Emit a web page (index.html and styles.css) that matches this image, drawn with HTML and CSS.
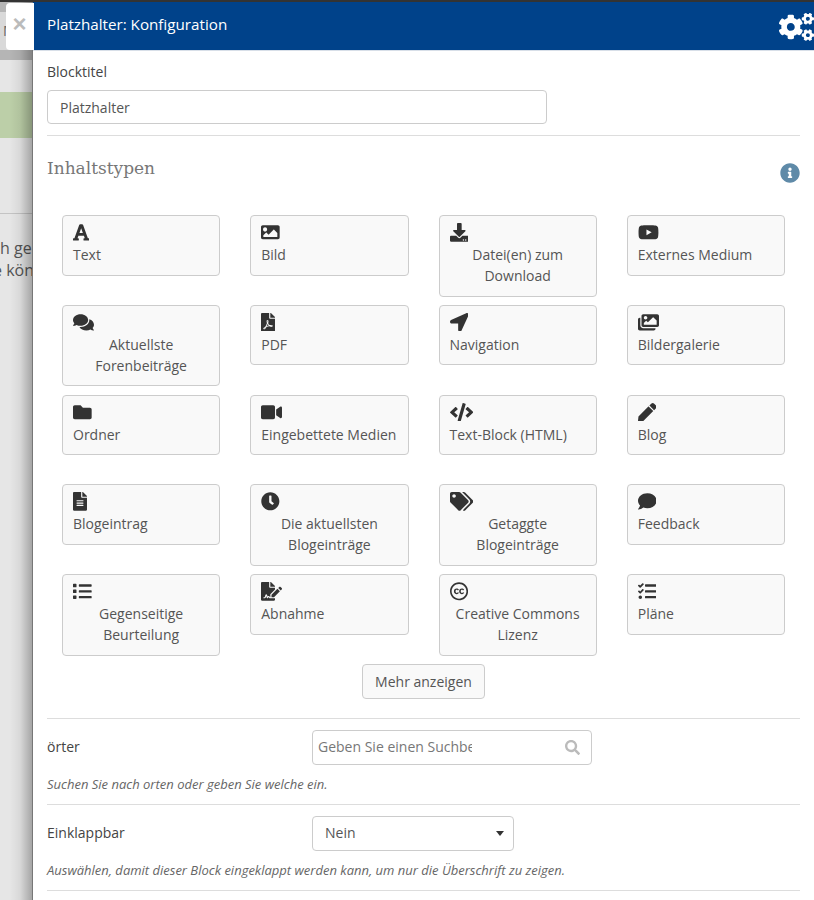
FILE: index.html
```html
<!DOCTYPE html>
<html lang="de">
<head>
<meta charset="utf-8">
<title>Platzhalter: Konfiguration</title>
<link rel="stylesheet" href="styles.css">
</head>
<body>
<div class="page">
  <div class="backdrop">
    <div class="bd-top"><span class="bd-top-letter">M</span></div>
    <div class="bd-nav"></div>
    <div class="bd-gap-a"></div>
    <div class="bd-alert"></div>
    <div class="bd-gap-b"></div>
    <div class="bd-text">
      <div class="bd-line">h gelöscht</div>
      <div class="bd-line bd-line-shift">e können</div>
    </div>
  </div>
  <button class="close" type="button" aria-label="Schließen">×</button>
  <main class="panel">
    <header class="panel-head">
      <h1 class="panel-title">Platzhalter: Konfiguration</h1>
      <svg class="cogs" viewBox="0 0 640 512"><path d="M512.1 191l-8.2 14.3c-3 5.3-9.4 7.5-15.1 5.4-11.8-4.4-22.6-10.7-32.1-18.6-4.6-3.8-5.8-10.5-2.8-15.7l8.2-14.3c-6.9-8-12.3-17.3-15.9-27.4h-16.5c-6 0-11.2-4.3-12.2-10.3-2-12-2.1-24.6 0-37.1 1-6 6.2-10.4 12.2-10.4h16.5c3.6-10.1 9-19.4 15.9-27.4l-8.2-14.3c-3-5.2-1.9-11.9 2.8-15.7 9.5-7.9 20.4-14.2 32.1-18.6 5.7-2.1 12.1.1 15.1 5.4l8.2 14.3c10.5-1.9 21.2-1.9 31.7 0L552 6.3c3-5.3 9.4-7.5 15.1-5.4 11.8 4.4 22.6 10.7 32.1 18.6 4.6 3.8 5.8 10.5 2.8 15.7l-8.2 14.3c6.9 8 12.3 17.3 15.9 27.4h16.5c6 0 11.2 4.3 12.2 10.3 2 12 2.1 24.6 0 37.1-1 6-6.2 10.4-12.2 10.4h-16.5c-3.6 10.1-9 19.4-15.9 27.4l8.2 14.3c3 5.2 1.9 11.9-2.8 15.7-9.5 7.9-20.4 14.2-32.1 18.6-5.7 2.1-12.1-.1-15.1-5.4l-8.2-14.3c-10.4 1.9-21.2 1.9-31.7 0zm-10.5-58.8c38.5 29.6 82.4-14.3 52.8-52.8-38.5-29.7-82.4 14.3-52.8 52.8zM386.3 286.1l33.7 16.8c10.1 5.8 14.5 18.1 10.5 29.1-8.9 24.2-26.4 46.4-42.6 65.8-7.4 8.9-20.2 11.1-30.3 5.3l-29.1-16.8c-16 13.7-34.6 24.6-54.9 31.7v33.6c0 11.6-8.3 21.6-19.7 23.6-24.6 4.2-50.4 4.4-75.9 0-11.5-2-20-11.9-20-23.6V418c-20.3-7.2-38.9-18-54.9-31.7L74 403c-10 5.8-22.9 3.6-30.3-5.3-16.2-19.4-33.3-41.6-42.2-65.7-4-10.9.4-23.2 10.5-29.1l33.3-16.8c-3.9-20.9-3.9-42.4 0-63.4L12 205.8c-10.1-5.8-14.6-18.1-10.5-29 8.9-24.2 26-46.4 42.2-65.8 7.4-8.9 20.2-11.1 30.3-5.3l29.1 16.8c16-13.7 34.6-24.6 54.9-31.7V57.1c0-11.5 8.2-21.5 19.6-23.5 24.6-4.2 50.5-4.4 76-.1 11.5 2 20 11.9 20 23.6v33.6c20.3 7.2 38.9 18 54.9 31.7l29.1-16.8c10-5.8 22.9-3.6 30.3 5.3 16.2 19.4 33.2 41.6 42.1 65.8 4 10.9.1 23.2-10 29.1l-33.7 16.8c3.9 21 3.9 42.5 0 63.5zm-117.6 21.1c59.2-77-28.7-164.9-105.7-105.7-59.2 77 28.7 164.9 105.7 105.7zm243.4 182.7l-8.2 14.3c-3 5.3-9.4 7.5-15.1 5.4-11.8-4.4-22.6-10.7-32.1-18.6-4.6-3.8-5.8-10.5-2.8-15.7l8.2-14.3c-6.9-8-12.3-17.3-15.9-27.4h-16.5c-6 0-11.2-4.3-12.2-10.3-2-12-2.1-24.6 0-37.1 1-6 6.2-10.4 12.2-10.4h16.5c3.6-10.1 9-19.4 15.9-27.4l-8.2-14.3c-3-5.2-1.9-11.9 2.8-15.7 9.5-7.9 20.4-14.2 32.1-18.6 5.7-2.1 12.1.1 15.1 5.4l8.2 14.3c10.5-1.9 21.2-1.9 31.7 0l8.2-14.3c3-5.3 9.4-7.5 15.1-5.4 11.8 4.4 22.6 10.7 32.1 18.6 4.6 3.8 5.8 10.5 2.8 15.7l-8.2 14.3c6.9 8 12.3 17.3 15.9 27.4h16.5c6 0 11.2 4.3 12.2 10.3 2 12 2.1 24.6 0 37.1-1 6-6.2 10.4-12.2 10.4h-16.5c-3.6 10.1-9 19.4-15.9 27.4l8.2 14.3c3 5.2 1.9 11.9-2.8 15.7-9.5 7.9-20.4 14.2-32.1 18.6-5.7 2.1-12.1-.1-15.1-5.4l-8.2-14.3c-10.4 1.9-21.2 1.9-31.7 0zM501.6 431c38.5 29.6 82.4-14.3 52.8-52.8-38.5-29.6-82.4 14.3-52.8 52.8z"/></svg>
    </header>
    <div class="panel-body">
      <section class="field-title">
        <label class="label" for="blocktitel">Blocktitel</label>
        <input class="text-input" id="blocktitel" type="text" value="Platzhalter">
      </section>
      <section class="types">
        <div class="types-head">
          <h2 class="types-title">Inhaltstypen</h2>
          <svg class="info" viewBox="0 0 512 512"><path d="M256 8C119.043 8 8 119.083 8 256c0 136.997 111.043 248 248 248s248-111.003 248-248C504 119.083 392.957 8 256 8zm0 110c23.196 0 42 18.804 42 42s-18.804 42-42 42-42-18.804-42-42 18.804-42 42-42zm56 254c0 6.627-5.373 12-12 12h-88c-6.627 0-12-5.373-12-12v-24c0-6.627 5.373-12 12-12h12v-64h-12c-6.627 0-12-5.373-12-12v-24c0-6.627 5.373-12 12-12h64c6.627 0 12 5.373 12 12v100h12c6.627 0 12 5.373 12 12v24z"/></svg>
        </div>
        <div class="grid">
          <a class="card"><svg class="ico" viewBox="0 0 448 512"><path d="M432 416h-23.41L277.88 53.69A32 32 0 0 0 247.58 32h-47.16a32 32 0 0 0-30.3 21.69L39.41 416H16a16 16 0 0 0-16 16v32a16 16 0 0 0 16 16h128a16 16 0 0 0 16-16v-32a16 16 0 0 0-16-16h-19.58l23.3-64h152.56l23.3 64H304a16 16 0 0 0-16 16v32a16 16 0 0 0 16 16h128a16 16 0 0 0 16-16v-32a16 16 0 0 0-16-16zM176.85 272L224 142.51 271.15 272z"/></svg><span class="card-label">Text</span></a>
          <a class="card"><svg class="ico" viewBox="0 0 512 512"><path d="M464 448H48c-26.51 0-48-21.49-48-48V112c0-26.51 21.49-48 48-48h416c26.51 0 48 21.49 48 48v288c0 26.51-21.49 48-48 48zM112 120c-30.928 0-56 25.072-56 56s25.072 56 56 56 56-25.072 56-56-25.072-56-56-56zM64 384h384V272l-87.515-87.515c-4.686-4.686-12.284-4.686-16.971 0L208 320l-55.515-55.515c-4.686-4.686-12.284-4.686-16.971 0L64 336v48z"/></svg><span class="card-label">Bild</span></a>
          <a class="card card-wrap"><svg class="ico" viewBox="0 0 512 512"><path d="M216 0h80c13.3 0 24 10.7 24 24v168h87.7c17.8 0 26.7 21.5 14.1 34.1L269.7 378.3c-7.5 7.5-19.8 7.5-27.3 0L90.1 226.1c-12.6-12.6-3.7-34.1 14.1-34.1H192V24c0-13.3 10.7-24 24-24zm296 376v112c0 13.3-10.7 24-24 24H24c-13.3 0-24-10.7-24-24V376c0-13.3 10.7-24 24-24h146.7l49 49c20.1 20.1 52.5 20.1 72.6 0l49-49H488c13.3 0 24 10.7 24 24zm-124 88c0-11-9-20-20-20s-20 9-20 20 9 20 20 20 20-9 20-20zm64 0c0-11-9-20-20-20s-20 9-20 20 9 20 20 20 20-9 20-20z"/></svg><span class="card-label">Datei(en) zum Download</span></a>
          <a class="card"><svg class="ico" viewBox="0 0 576 512"><path d="M549.655 124.083c-6.281-23.65-24.787-42.276-48.284-48.597C458.781 64 288 64 288 64S117.22 64 74.629 75.486c-23.497 6.322-42.003 24.947-48.284 48.597-11.412 42.867-11.412 132.305-11.412 132.305s0 89.438 11.412 132.305c6.281 23.65 24.787 41.5 48.284 47.821C117.22 448 288 448 288 448s170.78 0 213.371-11.486c23.497-6.321 42.003-24.171 48.284-47.821 11.412-42.867 11.412-132.305 11.412-132.305s0-89.438-11.412-132.305zm-317.51 213.508V175.185l142.739 81.205-142.739 81.201z"/></svg><span class="card-label">Externes Medium</span></a>

          <a class="card card-wrap"><svg class="ico" viewBox="0 0 576 512"><path d="M416 192c0-88.4-93.1-160-208-160S0 103.6 0 192c0 34.3 14.1 65.9 38 92-13.4 30.2-35.5 54.2-35.8 54.5-2.2 2.3-2.8 5.7-1.5 8.7S4.8 352 8 352c36.6 0 66.9-12.3 88.7-25 32.2 15.7 70.3 25 111.3 25 114.9 0 208-71.6 208-160zm122 220c23.9-26 38-57.7 38-92 0-66.9-53.5-124.2-129.3-148.1.9 6.6 1.3 13.3 1.3 20.1 0 105.9-107.7 192-240 192-10.8 0-21.3-.8-31.7-1.9C207.8 439.6 281.8 480 368 480c41 0 79.1-9.2 111.3-25 21.8 12.7 52.1 25 88.7 25 3.2 0 6.1-1.9 7.3-4.8 1.3-2.9.7-6.3-1.5-8.7-.3-.3-22.4-24.2-35.8-54.5z"/></svg><span class="card-label">Aktuellste Forenbeiträge</span></a>
          <a class="card"><svg class="ico" viewBox="0 0 384 512"><path d="M181.9 256.1c-5-16-4.9-46.9-2-46.9 8.4 0 7.6 36.9 2 46.9zm-1.7 47.2c-7.7 20.2-17.3 43.3-28.4 62.7 18.3-7 39-17.2 62.9-21.9-12.7-9.6-24.9-23.4-34.5-40.8zM86.1 428.1c0 .8 13.2-5.4 34.9-40.2-6.7 6.3-29.1 24.5-34.9 40.2zM248 160h136v328c0 13.3-10.7 24-24 24H24c-13.3 0-24-10.7-24-24V24C0 10.7 10.7 0 24 0h200v136c0 13.2 10.8 24 24 24zm-8 171.8c-20-12.2-33.3-29-42.7-53.8 4.5-18.5 11.6-46.6 6.2-64.2-4.7-29.4-42.4-26.5-47.8-6.8-5 18.3-.4 44.1 8.1 77-11.6 27.6-28.7 64.6-40.8 85.8-.1 0-.1.1-.2.1-27.1 13.9-73.6 44.5-54.5 68 5.6 6.9 16 10 21.5 10 17.9 0 35.7-18 61.1-61.8 25.8-8.5 54.1-19.1 79-23.2 21.7 11.8 47.1 19.5 64 19.5 29.2 0 31.2-32 19.7-43.4-13.9-13.6-54.3-9.7-73.6-7.2zM377 105L279 7c-4.5-4.5-10.6-7-17-7h-6v128h128v-6.1c0-6.3-2.5-12.4-7-16.9zm-74.1 255.3c4.1-2.7-2.5-11.9-42.8-9 37.1 15.8 42.8 9 42.8 9z"/></svg><span class="card-label">PDF</span></a>
          <a class="card"><svg class="ico" viewBox="0 0 512 512"><path d="M444.52 3.52L28.74 195.42c-47.97 22.39-31.98 92.75 19.19 92.75h175.91v175.91c0 51.17 70.36 67.17 92.75 19.19l191.9-415.78c15.99-38.39-25.59-79.97-63.97-63.97z"/></svg><span class="card-label">Navigation</span></a>
          <a class="card"><svg class="ico" viewBox="0 0 576 512"><path d="M480 416v16c0 26.51-21.49 48-48 48H48c-26.51 0-48-21.49-48-48V176c0-26.51 21.49-48 48-48h16v208c0 44.112 35.888 80 80 80h336zm96-80V80c0-26.51-21.49-48-48-48H144c-26.51 0-48 21.49-48 48v256c0 26.51 21.49 48 48 48h384c26.51 0 48-21.49 48-48zM256 128c0 26.51-21.49 48-48 48s-48-21.49-48-48 21.49-48 48-48 48 21.49 48 48zm-96 144l55.515-55.515c4.686-4.686 12.284-4.686 16.971 0L272 256l135.515-135.515c4.686-4.686 12.284-4.686 16.971 0L512 208v112H160v-48z"/></svg><span class="card-label">Bildergalerie</span></a>

          <a class="card"><svg class="ico" viewBox="0 0 512 512"><path d="M464 128H272l-64-64H48C21.49 64 0 85.49 0 112v288c0 26.51 21.49 48 48 48h416c26.51 0 48-21.49 48-48V176c0-26.51-21.49-48-48-48z"/></svg><span class="card-label">Ordner</span></a>
          <a class="card"><svg class="ico" viewBox="0 0 576 512"><path d="M336.2 64H47.8C21.4 64 0 85.4 0 111.8v288.4C0 426.6 21.4 448 47.8 448h288.4c26.4 0 47.8-21.4 47.8-47.8V111.8c0-26.4-21.4-47.8-47.8-47.8zm189.4 37.7L416 177.3v157.4l109.6 75.5c21.2 14.6 50.4-.3 50.4-25.8V127.5c0-25.4-29.1-40.4-50.4-25.8z"/></svg><span class="card-label">Eingebettete Medien</span></a>
          <a class="card"><svg class="ico" viewBox="0 0 640 512"><path d="M278.9 511.5l-61-17.7c-6.4-1.8-10-8.5-8.2-14.9L346.2 8.7c1.8-6.4 8.5-10 14.9-8.2l61 17.7c6.4 1.8 10 8.5 8.2 14.9L293.8 503.3c-1.9 6.4-8.5 10.1-14.9 8.2zm-114-112.2l43.5-46.4c4.6-4.9 4.3-12.7-.8-17.2L117 256l90.6-79.7c5.1-4.5 5.5-12.3.8-17.2l-43.5-46.4c-4.5-4.8-12.1-5.1-17-.5L3.8 247.2c-5.1 4.7-5.1 12.8 0 17.5l144.1 135.1c4.9 4.6 12.5 4.4 17-.5zm327.2.6l144.1-135.1c5.1-4.7 5.1-12.8 0-17.5L492.1 112.1c-4.8-4.5-12.4-4.3-17 .5L431.6 159c-4.6 4.9-4.3 12.7.8 17.2L523 256l-90.6 79.7c-5.1 4.5-5.5 12.3-.8 17.2l43.5 46.4c4.5 4.9 12.1 5.1 17 .6z"/></svg><span class="card-label">Text-Block (HTML)</span></a>
          <a class="card"><svg class="ico" viewBox="0 0 512 512"><path d="M290.74 93.24l128.02 128.02-277.99 277.99-114.14 12.6C11.35 513.54-1.56 500.62.14 485.34l12.7-114.22 277.9-278.88zm207.2-19.06l-60.11-60.11c-18.75-18.75-49.16-18.75-67.91 0l-56.55 56.55 128.02 128.02 56.55-56.55c18.75-18.76 18.75-49.16 0-67.91z"/></svg><span class="card-label">Blog</span></a>

          <a class="card"><svg class="ico" viewBox="0 0 384 512"><path d="M224 136V0H24C10.7 0 0 10.7 0 24v464c0 13.3 10.7 24 24 24h336c13.3 0 24-10.7 24-24V160H248c-13.2 0-24-10.8-24-24zm64 236c0 6.6-5.4 12-12 12H108c-6.6 0-12-5.4-12-12v-8c0-6.6 5.4-12 12-12h168c6.6 0 12 5.4 12 12v8zm0-64c0 6.6-5.4 12-12 12H108c-6.6 0-12-5.4-12-12v-8c0-6.6 5.4-12 12-12h168c6.6 0 12 5.4 12 12v8zm0-72v8c0 6.6-5.4 12-12 12H108c-6.6 0-12-5.4-12-12v-8c0-6.6 5.4-12 12-12h168c6.6 0 12 5.4 12 12zm96-114.1v6.1H256V0h6.1c6.4 0 12.5 2.5 17 7l97.9 98c4.5 4.5 7 10.6 7 16.9z"/></svg><span class="card-label">Blogeintrag</span></a>
          <a class="card card-wrap"><svg class="ico" viewBox="0 0 512 512"><path d="M256,8C119,8,8,119,8,256S119,504,256,504,504,393,504,256,393,8,256,8Zm92.49,313h0l-20,25a16,16,0,0,1-22.49,2.5h0l-67-49.72a40,40,0,0,1-15-31.23V112a16,16,0,0,1,16-16h32a16,16,0,0,1,16,16V256l58,42.5A16,16,0,0,1,348.49,321Z"/></svg><span class="card-label">Die aktuellsten Blogeinträge</span></a>
          <a class="card card-wrap"><svg class="ico" viewBox="0 0 640 512"><path d="M497.941 225.941L286.059 14.059A48 48 0 0 0 252.118 0H48C21.49 0 0 21.49 0 48v204.118a48 48 0 0 0 14.059 33.941l211.882 211.882c18.744 18.745 49.136 18.746 67.882 0l204.118-204.118c18.745-18.745 18.745-49.137 0-67.882zM112 160c-26.51 0-48-21.49-48-48s21.49-48 48-48 48 21.49 48 48-21.49 48-48 48zm513.941 133.823L421.823 497.941c-18.745 18.745-49.137 18.745-67.882 0l-.36-.36L527.64 323.522c16.999-16.999 26.36-39.6 26.36-63.64s-9.362-46.641-26.36-63.64L331.397 0h48.721a48 48 0 0 1 33.941 14.059l211.882 211.882c18.745 18.745 18.745 49.137 0 67.882z"/></svg><span class="card-label">Getaggte Blogeinträge</span></a>
          <a class="card"><svg class="ico" viewBox="0 0 512 512"><path d="M256 32C114.6 32 0 125.1 0 240c0 49.6 21.4 95 57 130.7C44.5 421.1 2.7 466 2.2 466.5c-2.2 2.3-2.8 5.7-1.5 8.7S4.8 480 8 480c66.3 0 116-31.8 140.6-51.4 32.7 12.3 69 19.4 107.4 19.4 141.4 0 256-93.1 256-208S397.4 32 256 32z"/></svg><span class="card-label">Feedback</span></a>

          <a class="card card-wrap"><svg class="ico" viewBox="0 0 512 512"><path d="M80 368H16a16 16 0 0 0-16 16v64a16 16 0 0 0 16 16h64a16 16 0 0 0 16-16v-64a16 16 0 0 0-16-16zm0-320H16A16 16 0 0 0 0 64v64a16 16 0 0 0 16 16h64a16 16 0 0 0 16-16V64a16 16 0 0 0-16-16zm0 160H16a16 16 0 0 0-16 16v64a16 16 0 0 0 16 16h64a16 16 0 0 0 16-16v-64a16 16 0 0 0-16-16zm416 176H176a16 16 0 0 0-16 16v32a16 16 0 0 0 16 16h320a16 16 0 0 0 16-16v-32a16 16 0 0 0-16-16zm0-320H176a16 16 0 0 0-16 16v32a16 16 0 0 0 16 16h320a16 16 0 0 0 16-16V80a16 16 0 0 0-16-16zm0 160H176a16 16 0 0 0-16 16v32a16 16 0 0 0 16 16h320a16 16 0 0 0 16-16v-32a16 16 0 0 0-16-16z"/></svg><span class="card-label">Gegenseitige Beurteilung</span></a>
          <a class="card"><svg class="ico" viewBox="0 0 576 512"><path d="M218.17 424.14c-2.95-5.92-8.09-6.52-10.17-6.52s-7.22.59-10.02 6.19l-7.67 15.34c-6.37 12.78-25.03 11.37-29.48-2.09L144 386.59l-10.61 31.88c-5.89 17.66-22.38 29.53-41 29.53H80c-8.84 0-16-7.16-16-16s7.16-16 16-16h12.39c4.83 0 9.11-3.08 10.64-7.66l18.19-54.64c3.3-9.81 12.44-16.41 22.78-16.41s19.48 6.59 22.77 16.41l13.88 41.64c19.75-16.19 54.06-9.7 66 14.16 1.89 3.78 5.49 5.95 9.36 6.26v-82.12l128-127.09V160H248c-13.2 0-24-10.8-24-24V0H24C10.7 0 0 10.7 0 24v464c0 13.3 10.7 24 24 24h336c13.3 0 24-10.7 24-24v-40l-128-.11c-16.12-.31-30.58-9.28-37.83-23.75zM384 121.9c0-6.3-2.5-12.4-7-16.9L279.1 7c-4.5-4.5-10.6-7-17-7H256v128h128v-6.1zm-96 225.06V416h68.99l161.68-162.78-67.88-67.88L288 346.96zm280.54-179.63l-31.87-31.87c-9.94-9.94-26.07-9.94-36.01 0l-27.25 27.25 67.88 67.88 27.25-27.25c9.95-9.94 9.95-26.07 0-36.01z"/></svg><span class="card-label">Abnahme</span></a>
          <a class="card card-wrap"><svg class="ico" viewBox="0 0 496 512"><path d="M245.83 214.87l-33.22 17.28c-9.43-19.58-25.24-19.93-27.46-19.93-22.13 0-33.22 14.61-33.22 43.84 0 23.57 9.21 43.84 33.22 43.84 14.47 0 24.65-7.09 30.57-21.26l30.55 15.5c-6.17 11.51-25.69 38.98-65.1 38.98-22.6 0-73.96-10.32-73.96-77.05 0-58.69 43-77.06 72.63-77.06 30.72-.01 52.7 11.95 65.99 35.86zm143.05 0l-32.78 17.28c-9.5-19.77-25.72-19.93-27.9-19.93-22.14 0-33.22 14.61-33.22 43.84 0 23.55 9.23 43.84 33.22 43.84 14.45 0 24.65-7.09 30.54-21.26l31 15.5c-2.1 3.75-21.39 38.98-65.09 38.98-22.69 0-73.96-9.87-73.96-77.05 0-58.67 42.97-77.06 72.63-77.06 30.71-.01 52.58 11.95 65.56 35.86zM247.56 8.05C104.74 8.05 0 123.11 0 256.05c0 138.49 113.6 248 247.56 248 129.93 0 248.44-100.87 248.44-248 0-137.87-106.62-248-248.44-248zm.87 450.81c-112.54 0-203.7-93.04-203.7-202.81 0-105.42 85.43-203.27 203.72-203.27 112.53 0 202.82 89.46 202.82 203.26-.01 121.69-99.68 202.82-202.84 202.82z"/></svg><span class="card-label">Creative Commons Lizenz</span></a>
          <a class="card"><svg class="ico" viewBox="0 0 512 512"><path d="M139.61 35.5a12 12 0 0 0-17 0L58.93 98.81l-22.7-22.12a12 12 0 0 0-17 0L3.53 92.41a12 12 0 0 0 0 17l47.59 47.4a12.78 12.78 0 0 0 17.61 0l15.59-15.62L156.52 69a12.09 12.09 0 0 0 .09-17zm0 159.19a12 12 0 0 0-17 0l-63.68 63.72-22.7-22.1a12 12 0 0 0-17 0L3.53 252a12 12 0 0 0 0 17L51 316.5a12.77 12.77 0 0 0 17.6 0l15.7-15.69 72.2-72.22a12 12 0 0 0 .09-16.9zM64 368c-26.49 0-48.59 21.5-48.59 48S37.53 464 64 464a48 48 0 0 0 0-96zm432 16H208a16 16 0 0 0-16 16v32a16 16 0 0 0 16 16h288a16 16 0 0 0 16-16v-32a16 16 0 0 0-16-16zm0-320H208a16 16 0 0 0-16 16v32a16 16 0 0 0 16 16h288a16 16 0 0 0 16-16V80a16 16 0 0 0-16-16zm0 160H208a16 16 0 0 0-16 16v32a16 16 0 0 0 16 16h288a16 16 0 0 0 16-16v-32a16 16 0 0 0-16-16z"/></svg><span class="card-label">Pläne</span></a>
        </div>
        <div class="more-row"><button class="more" type="button">Mehr anzeigen</button></div>
      </section>
      <section class="row">
        <div class="row-main">
          <label class="label row-label" for="orte">örter</label>
          <div class="search">
            <input class="search-input" id="orte" type="text" placeholder="Geben Sie einen Suchbegriff ein">
            <svg class="search-ico" viewBox="0 0 512 512"><path d="M505 442.7L405.3 343c-4.5-4.5-10.6-7-17-7H372c27.6-35.3 44-79.7 44-128C416 93.1 322.9 0 208 0S0 93.1 0 208s93.1 208 208 208c48.3 0 92.7-16.4 128-44v16.3c0 6.4 2.5 12.5 7 17l99.7 99.7c9.4 9.4 24.6 9.4 33.9 0l28.3-28.3c9.4-9.4 9.4-24.6.1-34zM208 336c-70.7 0-128-57.2-128-128 0-70.7 57.2-128 128-128 70.7 0 128 57.2 128 128 0 70.7-57.2 128-128 128z"/></svg>
          </div>
        </div>
        <p class="help">Suchen Sie nach orten oder geben Sie welche ein.</p>
      </section>
      <section class="row">
        <div class="row-main">
          <span class="label row-label">Einklappbar</span>
          <div class="select"><span>Nein</span><span class="caret"></span></div>
        </div>
        <p class="help">Auswählen, damit dieser Block eingeklappt werden kann, um nur die Überschrift zu zeigen.</p>
      </section>
    </div>
  </main>
</div>
</body>
</html>
```

FILE: styles.css
```css
* { box-sizing: border-box; }
html, body { margin: 0; padding: 0; height: 100%; overflow: hidden; }
body { font-family: "Open Sans", "Liberation Sans", sans-serif; font-size: 14px; line-height: 21px; color: #333; background: #e6e6e6; }

.page { position: relative; display: flex; height: 900px; border-top: 2px solid #333; overflow: hidden; }

.backdrop { position: relative; flex: 0 0 32px; overflow: hidden; background: #e6e6e6; display: flex; flex-direction: column; }
.backdrop::after { content: ""; position: absolute; inset: 0; background: linear-gradient(to right, rgba(0,0,0,0) 30%, rgba(0,0,0,.06) 62%, rgba(0,0,0,.28) 100%); }
.bd-top { height: 48px; background: #d9d9d9; border-top: 10px solid #b5b5b5; padding: 8px 0 0 3px; font-size: 14px; color: #666; white-space: nowrap; }
.bd-top-letter { display: block; }
.bd-nav { height: 10px; background: #b5b5b5; }
.bd-gap-a { height: 32px; }
.bd-alert { height: 46px; background: #bccfa8; }
.bd-gap-b { height: 76px; border-bottom: 1px solid #c4c4c4; }
.bd-text { padding-top: 23px; font-size: 16px; line-height: 22px; color: #555; white-space: nowrap; }
.bd-line-shift { margin-left: -7px; }

.close { position: absolute; left: 6px; top: 1px; width: 28px; height: 47px; padding: 0 1px 6px 0; border: 0; border-radius: 4px 0 0 4px; background: #fff; color: #bbb; font-family: "Liberation Sans", sans-serif; font-size: 24px; font-weight: 700; line-height: 1; z-index: 2; }

.panel { flex: 1 1 auto; min-width: 0; background: #fff; border-left: 1px solid #777; display: flex; flex-direction: column; }
.panel-head { flex: none; height: 49px; background: #00428a; display: flex; align-items: center; justify-content: space-between; padding-left: 14px; border-bottom: 1px solid #d8dfe8; }
.panel-title { margin: 0 0 3px; color: #fff; font-size: 15.2px; font-weight: 400; line-height: 21px; }
.cogs { width: 35px; height: 28px; fill: #fff; margin-top: 1px; }

.panel-body { padding: 10px 14px 0; flex: 1 1 auto; }
.label { display: block; font-size: 14px; line-height: 21px; color: #444; }
.field-title { padding-bottom: 11px; border-bottom: 1px solid #ddd; }
.text-input { display: block; margin-top: 8px; width: 500px; height: 34px; padding: 0 12px; border: 1px solid #ccc; border-radius: 4px; font: 14px/21px "Open Sans", sans-serif; color: #555; background: #fff; }

.types { padding-bottom: 19px; border-bottom: 1px solid #ddd; }
.types-head { display: flex; justify-content: space-between; align-items: flex-start; padding-top: 20px; height: 79px; }
.types-title { margin: 0; font-family: "DejaVu Serif", serif; font-size: 17px; font-weight: 400; line-height: 24px; color: #777; }
.info { width: 20px; height: 20px; fill: #5f8aa8; margin-top: 7px; }

.grid { display: grid; grid-template-columns: repeat(4, 158.25px); column-gap: 30px; grid-auto-rows: 89.75px; align-items: start; padding-left: 15px; height: 449px; }
.card { display: block; border: 1px solid #ccc; border-radius: 4px; background: #f9f9f9; padding: 6px 10px 9.6px; color: #555; }
.ico { display: block; height: 18.67px; width: auto; margin: 1px 0 2.4px; fill: #333; }
.card-label { display: block; font-size: 14px; line-height: 21px; }
.card-wrap .card-label { text-align: center; }

.more-row { display: flex; justify-content: center; }
.more { height: 35px; width: 123px; border: 1px solid #ccc; border-radius: 4px; background: #f9f9f9; color: #555; font: 14px/21px "Open Sans", sans-serif; padding: 0; }

.row { border-bottom: 1px solid #ddd; padding-top: 11px; height: 86px; }
.row-main { display: flex; align-items: center; }
.row-label { width: 265px; margin-bottom: 2px; }
.search { width: 280px; height: 35px; border: 1px solid #ccc; border-radius: 4px; display: flex; align-items: center; justify-content: space-between; padding: 0 11px 0 0; }
.search-input { width: 159px; border: 0; padding: 0 0 0 5px; margin-bottom: 2px; font: 14px/21px "Open Sans", sans-serif; background: transparent; outline: 0; }
.search-input::placeholder { color: #777; opacity: 1; }
.search-ico { width: 15px; height: 15px; fill: #bbb; }
.select { width: 202px; height: 35px; border: 1px solid #ccc; border-radius: 4px; display: flex; align-items: center; justify-content: space-between; padding: 0 9px 2px 12px; color: #555; }
.caret { width: 0; height: 0; border-left: 4.5px solid transparent; border-right: 4.5px solid transparent; border-top: 5px solid #333; margin-top: 2px; }
.help { margin: 9px 0 0; font-size: 13px; line-height: 21px; font-style: italic; color: #666; }
```
